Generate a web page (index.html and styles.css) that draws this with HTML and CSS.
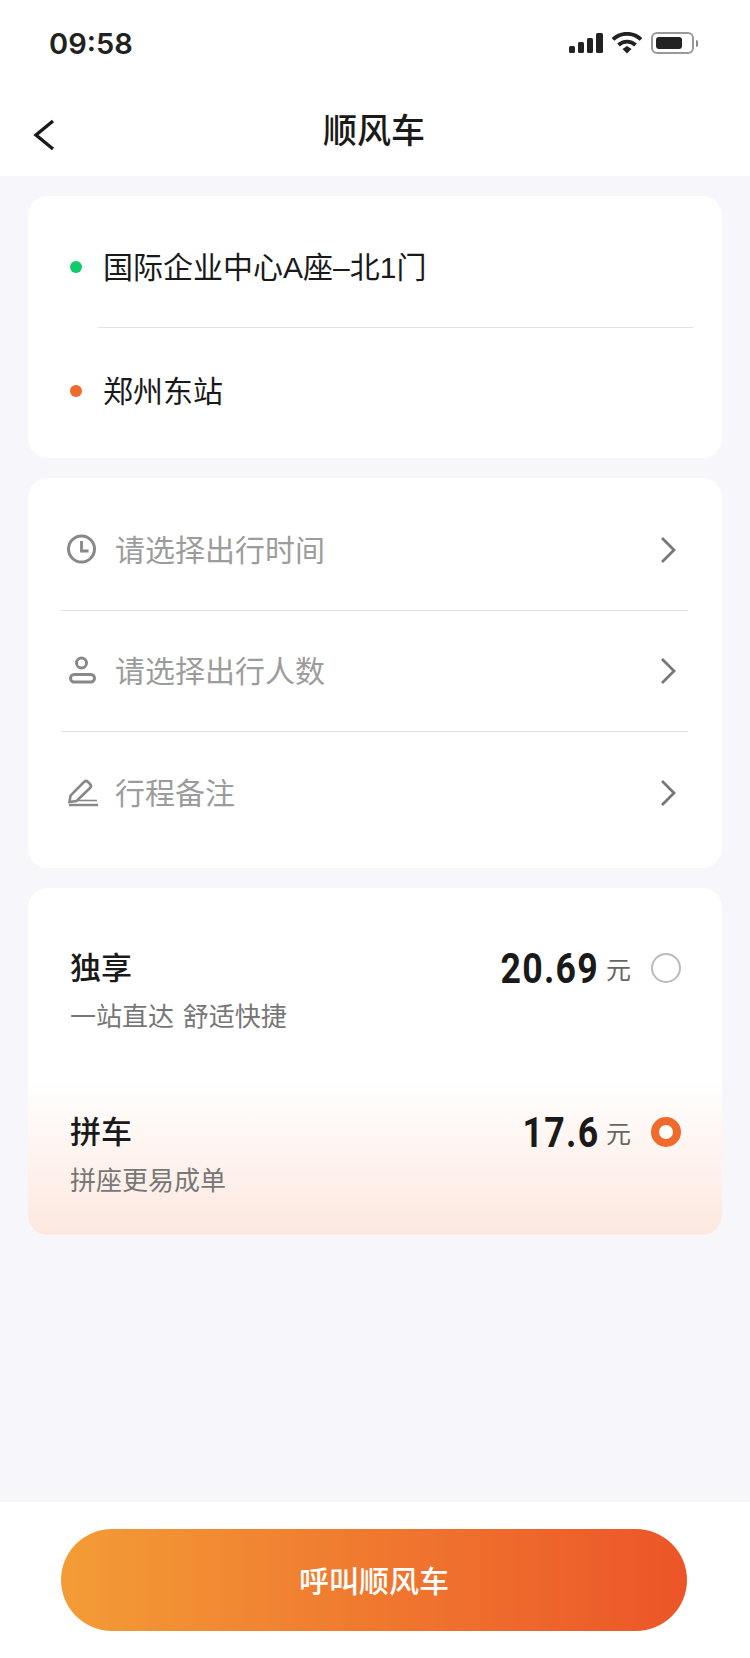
FILE: index.html
```html
<!DOCTYPE html>
<html lang="zh-CN">
<head>
    <meta charset="UTF-8">
    <meta name="viewport" content="width=device-width, initial-scale=1.0">
    <title>顺风车</title>
    <link rel="stylesheet" href="styles.css">
</head>
<body>
    <div class="status-bar">
        <span class="time">09:58</span>
        <div class="status-icons">
            <svg class="signal" width="34" height="20" viewBox="0 0 34 20">
                <rect x="0" y="13" width="6" height="7" rx="1.5"/>
                <rect x="9" y="9" width="6" height="11" rx="1.5"/>
                <rect x="18" y="5" width="6" height="15" rx="1.5"/>
                <rect x="27" y="0" width="7" height="20" rx="1.5"/>
            </svg>
            <svg class="wifi" width="30" height="22" viewBox="0 0 30 22">
                <path d="M1 7.5 A20 20 0 0 1 29 7.5" fill="none" stroke="#222" stroke-width="3.8"/>
                <path d="M6.5 13 A12.5 12.5 0 0 1 23.5 13" fill="none" stroke="#222" stroke-width="3.8"/>
                <path d="M10.5 17 L15 14 L19.5 17 L15 21.5 Z" fill="#222"/>
            </svg>
            <div class="battery"><div class="battery-level"></div></div>
            <div class="battery-tip"></div>
        </div>
    </div>

    <div class="nav-bar">
        <svg class="back" width="22" height="32" viewBox="0 0 22 32">
            <path d="M20 2 L3 16 L20 30" fill="none" stroke="#1a1a1a" stroke-width="3.4"/>
        </svg>
        <h1>顺风车</h1>
    </div>

    <main class="content">
        <section class="card route">
            <div class="route-row first">
                <span class="dot green"></span>
                <span class="route-name">国际企业中心A座–北1门</span>
            </div>
            <div class="route-line"></div>
            <div class="route-row">
                <span class="dot orange"></span>
                <span class="route-name">郑州东站</span>
            </div>
        </section>

        <section class="card options">
            <div class="option-row">
                <svg class="row-icon" width="32" height="32" viewBox="0 0 32 32">
                    <circle cx="15.5" cy="15" r="13" fill="none" stroke="#888" stroke-width="3"/>
                    <path d="M15.5 7 V17 H22.5" fill="none" stroke="#888" stroke-width="2.8"/>
                </svg>
                <span class="row-label">请选择出行时间</span>
                <svg class="arrow" width="16" height="28" viewBox="0 0 16 28">
                    <path d="M2 2 L14 14 L2 26" fill="none" stroke="#777" stroke-width="2.8"/>
                </svg>
            </div>
            <div class="option-row">
                <svg class="row-icon" width="32" height="32" viewBox="0 0 32 32">
                    <circle cx="15.5" cy="8" r="5" fill="none" stroke="#888" stroke-width="3"/>
                    <rect x="4.5" y="19.5" width="24" height="7.5" rx="3.7" fill="none" stroke="#888" stroke-width="3"/>
                </svg>
                <span class="row-label">请选择出行人数</span>
                <svg class="arrow" width="16" height="28" viewBox="0 0 16 28">
                    <path d="M2 2 L14 14 L2 26" fill="none" stroke="#777" stroke-width="2.8"/>
                </svg>
            </div>
            <div class="option-row">
                <svg class="row-icon" width="32" height="32" viewBox="0 0 32 32">
                    <path d="M3.5 25 L4.5 18.5 L18 5 Q20 3 22 5 L24 7 Q26 9 24 11 L10.5 24 Z" fill="none" stroke="#888" stroke-width="2.6"/>
                    <path d="M12 23.5 H31" fill="none" stroke="#888" stroke-width="1.6"/>
                    <path d="M3 28 H32" fill="none" stroke="#888" stroke-width="2.4"/>
                </svg>
                <span class="row-label">行程备注</span>
                <svg class="arrow" width="16" height="28" viewBox="0 0 16 28">
                    <path d="M2 2 L14 14 L2 26" fill="none" stroke="#777" stroke-width="2.8"/>
                </svg>
            </div>
        </section>

        <section class="card plans">
            <div class="plan">
                <div class="plan-info">
                    <div class="plan-name">独享</div>
                    <div class="plan-desc">一站直达 舒适快捷</div>
                </div>
                <div class="plan-price">
                    <span class="amount">20.69</span>
                    <span class="unit">元</span>
                    <span class="radio"></span>
                </div>
            </div>
            <div class="plan selected">
                <div class="plan-info">
                    <div class="plan-name">拼车</div>
                    <div class="plan-desc">拼座更易成单</div>
                </div>
                <div class="plan-price">
                    <span class="amount">17.6</span>
                    <span class="unit">元</span>
                    <span class="radio"></span>
                </div>
            </div>
        </section>
    </main>

    <footer class="bottom-bar">
        <button class="call-btn">呼叫顺风车</button>
    </footer>
</body>
</html>
```

FILE: styles.css
```css
* {
    box-sizing: border-box;
}

body {
    font-family: "Noto Sans CJK SC", "Noto Sans", sans-serif;
    background-color: #f6f6fb;
    color: #1a1a1a;
    margin: 0;
    height: 1658px;
    display: flex;
    flex-direction: column;
}

.status-bar {
    height: 88px;
    background-color: white;
    display: flex;
    align-items: center;
    justify-content: space-between;
    padding: 0 52px 2px 49px;
}

.time {
    font-family: Inter, sans-serif;
    font-weight: 600;
    font-size: 29px;
    color: #222;
}

.status-icons {
    display: flex;
    align-items: center;
}

.signal {
    fill: #222;
}

.wifi {
    margin-left: 9px;
}

.battery {
    width: 43px;
    height: 22px;
    margin-left: 9px;
    padding: 3px;
    border: 2px solid #999;
    border-radius: 6px;
}

.battery-level {
    width: 26px;
    height: 100%;
    background-color: #222;
    border-radius: 3px;
}

.battery-tip {
    width: 2px;
    height: 7px;
    margin-left: 2px;
    background-color: #888;
    border-radius: 0 2px 2px 0;
}

.nav-bar {
    height: 88px;
    background-color: white;
    display: flex;
    align-items: center;
    justify-content: center;
    position: relative;
}

.back {
    position: absolute;
    left: 33px;
    top: 31px;
}

h1 {
    margin: 0 2px 6px 0;
    font-size: 34px;
    font-weight: 500;
    line-height: 44px;
}

.content {
    flex: 1;
    padding: 20px 28px 0;
    display: flex;
    flex-direction: column;
    gap: 20px;
}

.card {
    background-color: white;
    border-radius: 20px;
}

.route {
    height: 262px;
    padding: 10px 29px 0 42px;
}

.route-row {
    height: 126px;
    display: flex;
    align-items: center;
    font-size: 30px;
}

.route-row.first {
    height: 121px;
}

.route-name {
    margin-bottom: 4px;
    font-family: "Liberation Sans", "Noto Sans CJK SC", sans-serif;
}

.route-line {
    height: 1px;
    margin-left: 28px;
    background-color: #e2e2e2;
}

.dot {
    width: 12px;
    height: 12px;
    border-radius: 50%;
    margin-right: 21px;
    flex-shrink: 0;
}

.dot.green {
    background-color: #0fcb6b;
}

.dot.orange {
    background-color: #f06a2c;
}

.options {
    height: 390px;
    padding: 12px 34px 0 33px;
}

.option-row {
    height: 121px;
    display: flex;
    align-items: center;
    border-bottom: 1px solid #e2e2e2;
}

.option-row:last-child {
    border-bottom: none;
}

.row-icon {
    margin-left: 5px;
    margin-right: 17px;
    flex-shrink: 0;
}

.row-label {
    flex: 1;
    margin-bottom: 4px;
    font-size: 30px;
    color: #9c9c9c;
}

.arrow {
    margin-right: 12px;
}

.plans {
    height: 347px;
    overflow: hidden;
}

.plan {
    height: 182px;
    padding: 58px 41px 0 42px;
    display: flex;
    justify-content: space-between;
    align-items: flex-start;
}

.plan.selected {
    height: 165px;
    padding-top: 40px;
    background: linear-gradient(to bottom, white 6%, #fde8df);
}

.plan-name {
    margin-top: -2px;
    font-size: 31px;
    font-weight: 500;
    line-height: 44px;
}

.plan-desc {
    margin-top: 11px;
    font-size: 26px;
    line-height: 32px;
    word-spacing: 3px;
    color: #777;
}

.plan-price {
    display: flex;
    align-items: center;
    height: 44px;
}

.amount {
    font-family: Roboto, sans-serif;
    font-weight: 700;
    font-size: 42px;
    letter-spacing: 1.5px;
    transform: scaleX(0.85);
    transform-origin: right center;
}

.unit {
    margin-left: 7px;
    font-size: 25px;
    color: #666;
}

.radio {
    width: 30px;
    height: 30px;
    margin-left: 20px;
    border: 2px solid #bbb;
    border-radius: 50%;
}

.selected .radio {
    border: 8.5px solid #f06a2c;
    background-color: white;
}

.bottom-bar {
    height: 156px;
    background-color: white;
    padding: 27px 63px 0 61px;
}

.call-btn {
    display: block;
    width: 100%;
    height: 102px;
    padding-bottom: 4px;
    border: none;
    border-radius: 51px;
    background: linear-gradient(to right, #f39c36, #ec5528);
    color: white;
    font-family: inherit;
    font-size: 30px;
    font-weight: 500;
}
```
